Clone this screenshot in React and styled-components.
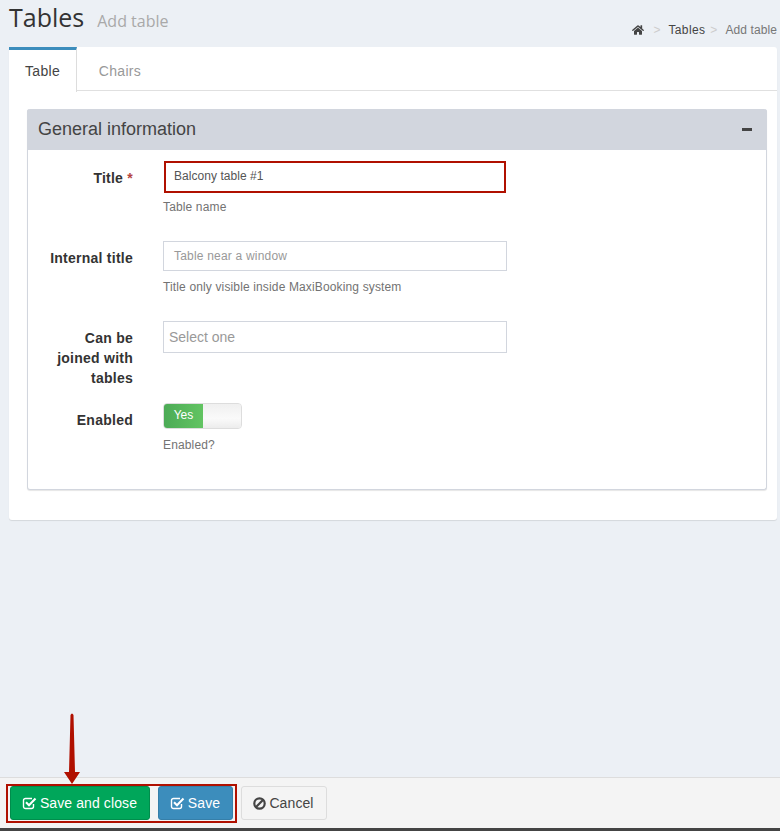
import React from 'react';
import styled, { createGlobalStyle } from 'styled-components';
import { FaHome } from 'react-icons/fa';

const Global = createGlobalStyle`
  html, body { margin: 0; padding: 0; background: #ecf0f5; }
  body { font-family: "Liberation Sans", Arial, sans-serif; color: #333; font-size: 14px; }
  * { box-sizing: border-box; }
`;
const Page = styled.div`
  width: 780px; height: 831px; display: flex; flex-direction: column; overflow: hidden; position: relative;
`;
const Main = styled.div`flex: 1; padding: 0 3px 0 9px;`;
const Header = styled.header`
  height: 47px; display: flex; align-items: flex-start; justify-content: space-between;
`;
const HeadTitle = styled.div`display: flex; align-items: baseline; gap: 13px; padding-top: 1px;`;
const H1 = styled.h1`margin: 0; font: 400 25px/33px "Open Sans", sans-serif; color: #333;`;
const Small = styled.span`font: 400 16px/20px "Open Sans", sans-serif; color: #a9a9a9;`;
const Crumbs = styled.nav`
  display: flex; align-items: center; font-size: 12px; line-height: 14px; color: #444; padding-top: 23px; letter-spacing: .1px;
`;
const Sep = styled.span`color: #ccc; margin: 0 ${p => p.$r || 8}px 0 ${p => p.$l || 5}px; font-size: 12px;`;
const CrumbLink = styled.span`letter-spacing: .35px;`;
const Current = styled.span`color: #777;`;
const Card = styled.section`
  background: #fff; border-radius: 0 3px 3px 3px; height: 473px; box-shadow: 0 1px 1px rgba(0,0,0,.1);
`;
const Tabs = styled.div`display: flex; height: 44px; border-bottom: 1px solid #e0e0e0;`;
const Tab = styled.div`
  font-size: 14px; line-height: 14px; width: ${p => p.$w}px; text-align: center; padding-top: ${p => p.$active ? 14 : 17}px;
  letter-spacing: .3px;
  color: ${p => p.$active ? '#444' : '#999'};
  ${p => p.$active ? 'border-top: 3px solid #3c8dbc; border-right: 1px solid #ddd; height: 45px; background: #fff;' : ''}
`;
const Panel = styled.div`
  margin: 18px 10px 0 18px; height: 381px; background: #fff; border-radius: 3px;
  border: 1px solid #d2d6de; border-top: 0; box-shadow: 0 1px 1px rgba(0,0,0,.1);
`;
const PanelHead = styled.div`
  height: 41px; background: #d2d6de; border-radius: 3px 3px 0 0; margin: 0 -1px; display: flex; align-items: center; justify-content: space-between;
  padding: 0 15px 0 11px; font-size: 18px; color: #444;
`;
const Minus = styled.span`width: 10px; height: 3px; background: #444;`;
const Form = styled.div`padding-top: 11px; display: flex; flex-direction: column;`;
const Row = styled.div`display: grid; grid-template-columns: 105px 344px; column-gap: 30px; height: ${p => p.$h}px;`;
const Label = styled.label`
  font-weight: 700; font-size: 14px; line-height: 20px; color: #333; text-align: right; padding: 7px 0 0 15px; letter-spacing: .25px;
`;
const Star = styled.span`color: #b5453f;`;
const Field = styled.div`
  height: ${p => p.$h || 30}px; border: 1px solid #d2d6de; background: #fff; display: flex; align-items: center;
  padding-left: ${p => p.$pl || 10}px; font-size: ${p => p.$fs || 12}px; color: ${p => p.$ph ? '#999' : '#555'};
  letter-spacing: ${p => p.$fs ? 0 : .2}px;
`;
const Marked = styled(Field)`
  border: 2px solid #b01000; width: 342px; height: 32px; margin-left: 1px; padding: 0 0 2px 8px; color: #555; letter-spacing: .05px;
`;
const Help = styled.div`font-size: 12px; line-height: 14px; color: #737373; margin-top: ${p => p.$mt || 9}px; letter-spacing: .14px;`;
const Switch = styled.div`
  width: 79px; height: 26px; border: 1px solid #ddd; border-radius: 4px; display: flex; overflow: hidden;
  box-shadow: inset 0 1px 2px rgba(0,0,0,.1);
`;
const On = styled.div`
  width: 39px; background: linear-gradient(90deg, #4cab56, #62c462); color: #fff; font-size: 12px; text-align: center; line-height: 22px;
`;
const Off = styled.div`flex: 1; background: linear-gradient(#f0f0f0, #fafafa 60%, #ececec);`;
const Footer = styled.footer`
  height: 54px; background: #f4f4f4; border-top: 1px solid #ddd; border-bottom: 3px solid #444; display: flex; gap: 8px; padding: 8px 0 0 10px; position: relative;
`;
const Btn = styled.div`
  width: ${p => p.$w}px; height: 34px; border-radius: 3px; border: 1px solid ${p => p.$b}; background: ${p => p.$bg}; color: ${p => p.$c || '#fff'};
  display: flex; align-items: center; justify-content: center; gap: 3px; font-size: 14px; letter-spacing: .1px; padding-right: 1px;
`;
const Highlight = styled.div`
  position: absolute; left: 6px; top: 6px; width: 231px; height: 39px; border: 2px solid #b01000; pointer-events: none;
`;
const Arrow = styled.svg`position: absolute; left: 62px; top: 712px;`;

const CheckIcon = () => (
  <svg width="15" height="14" viewBox="0 0 15 14" fill="none" stroke="currentColor">
    <path d="M11.5 8v2.5a2 2 0 0 1-2 2h-6a2 2 0 0 1-2-2v-6a2 2 0 0 1 2-2h6.5" strokeWidth="1.4" />
    <path d="M4 6.3 L7 9.2 L13.5 2.5" strokeWidth="2.1" />
  </svg>
);
const BanIcon = () => (
  <svg width="13" height="13" viewBox="0 0 13 13" fill="none" stroke="currentColor" strokeWidth="2.2">
    <circle cx="6.5" cy="6.5" r="5.2" />
    <path d="M2.8 10.2 L10.2 2.8" />
  </svg>
);

export default function App() {
  return (
    <Page>
      <Global />
      <Main>
        <Header>
          <HeadTitle><H1>Tables</H1><Small>Add table</Small></HeadTitle>
          <Crumbs>
            <FaHome size={12} color="#444" />
            <Sep $l={9} $r={8}>&gt;</Sep>
            <CrumbLink>Tables</CrumbLink>
            <Sep $l={5} $r={8}>&gt;</Sep>
            <Current>Add table</Current>
          </Crumbs>
        </Header>
        <Card>
          <Tabs>
            <Tab $active $w={68}>Table</Tab>
            <Tab $w={86}>Chairs</Tab>
          </Tabs>
          <Panel>
            <PanelHead>General information<Minus /></PanelHead>
            <Form>
              <Row $h={80}>
                <Label>Title <Star>*</Star></Label>
                <div>
                  <Marked>Balcony table #1</Marked>
                  <Help $mt={7}>Table name</Help>
                </div>
              </Row>
              <Row $h={80}>
                <Label>Internal title</Label>
                <div>
                  <Field $ph>Table near a window</Field>
                  <Help>Title only visible inside MaxiBooking system</Help>
                </div>
              </Row>
              <Row $h={82}>
                <Label>Can be joined with tables</Label>
                <Field $ph $h={32} $pl={5} $fs={14}>Select one</Field>
              </Row>
              <Row $h={70}>
                <Label>Enabled</Label>
                <div>
                  <Switch><On>Yes</On><Off /></Switch>
                  <Help>Enabled?</Help>
                </div>
              </Row>
            </Form>
          </Panel>
        </Card>
      </Main>
      <Footer>
        <Btn $w={140} $bg="#00a65a" $b="#008d4c"><CheckIcon />Save and close</Btn>
        <Btn $w={75} $bg="#3c8dbc" $b="#367fa9"><CheckIcon />Save</Btn>
        <Btn $w={86} $bg="#f4f4f4" $b="#ddd" $c="#444"><BanIcon />Cancel</Btn>
        <Highlight />
      </Footer>
      <Arrow width="20" height="74" viewBox="0 0 20 74">
        <path d="M8.5 3 Q10 0 11.5 3 L13 60 H18 L10 72 L2 60 H7 Z" fill="#b01000" />
      </Arrow>
    </Page>
  );
}
